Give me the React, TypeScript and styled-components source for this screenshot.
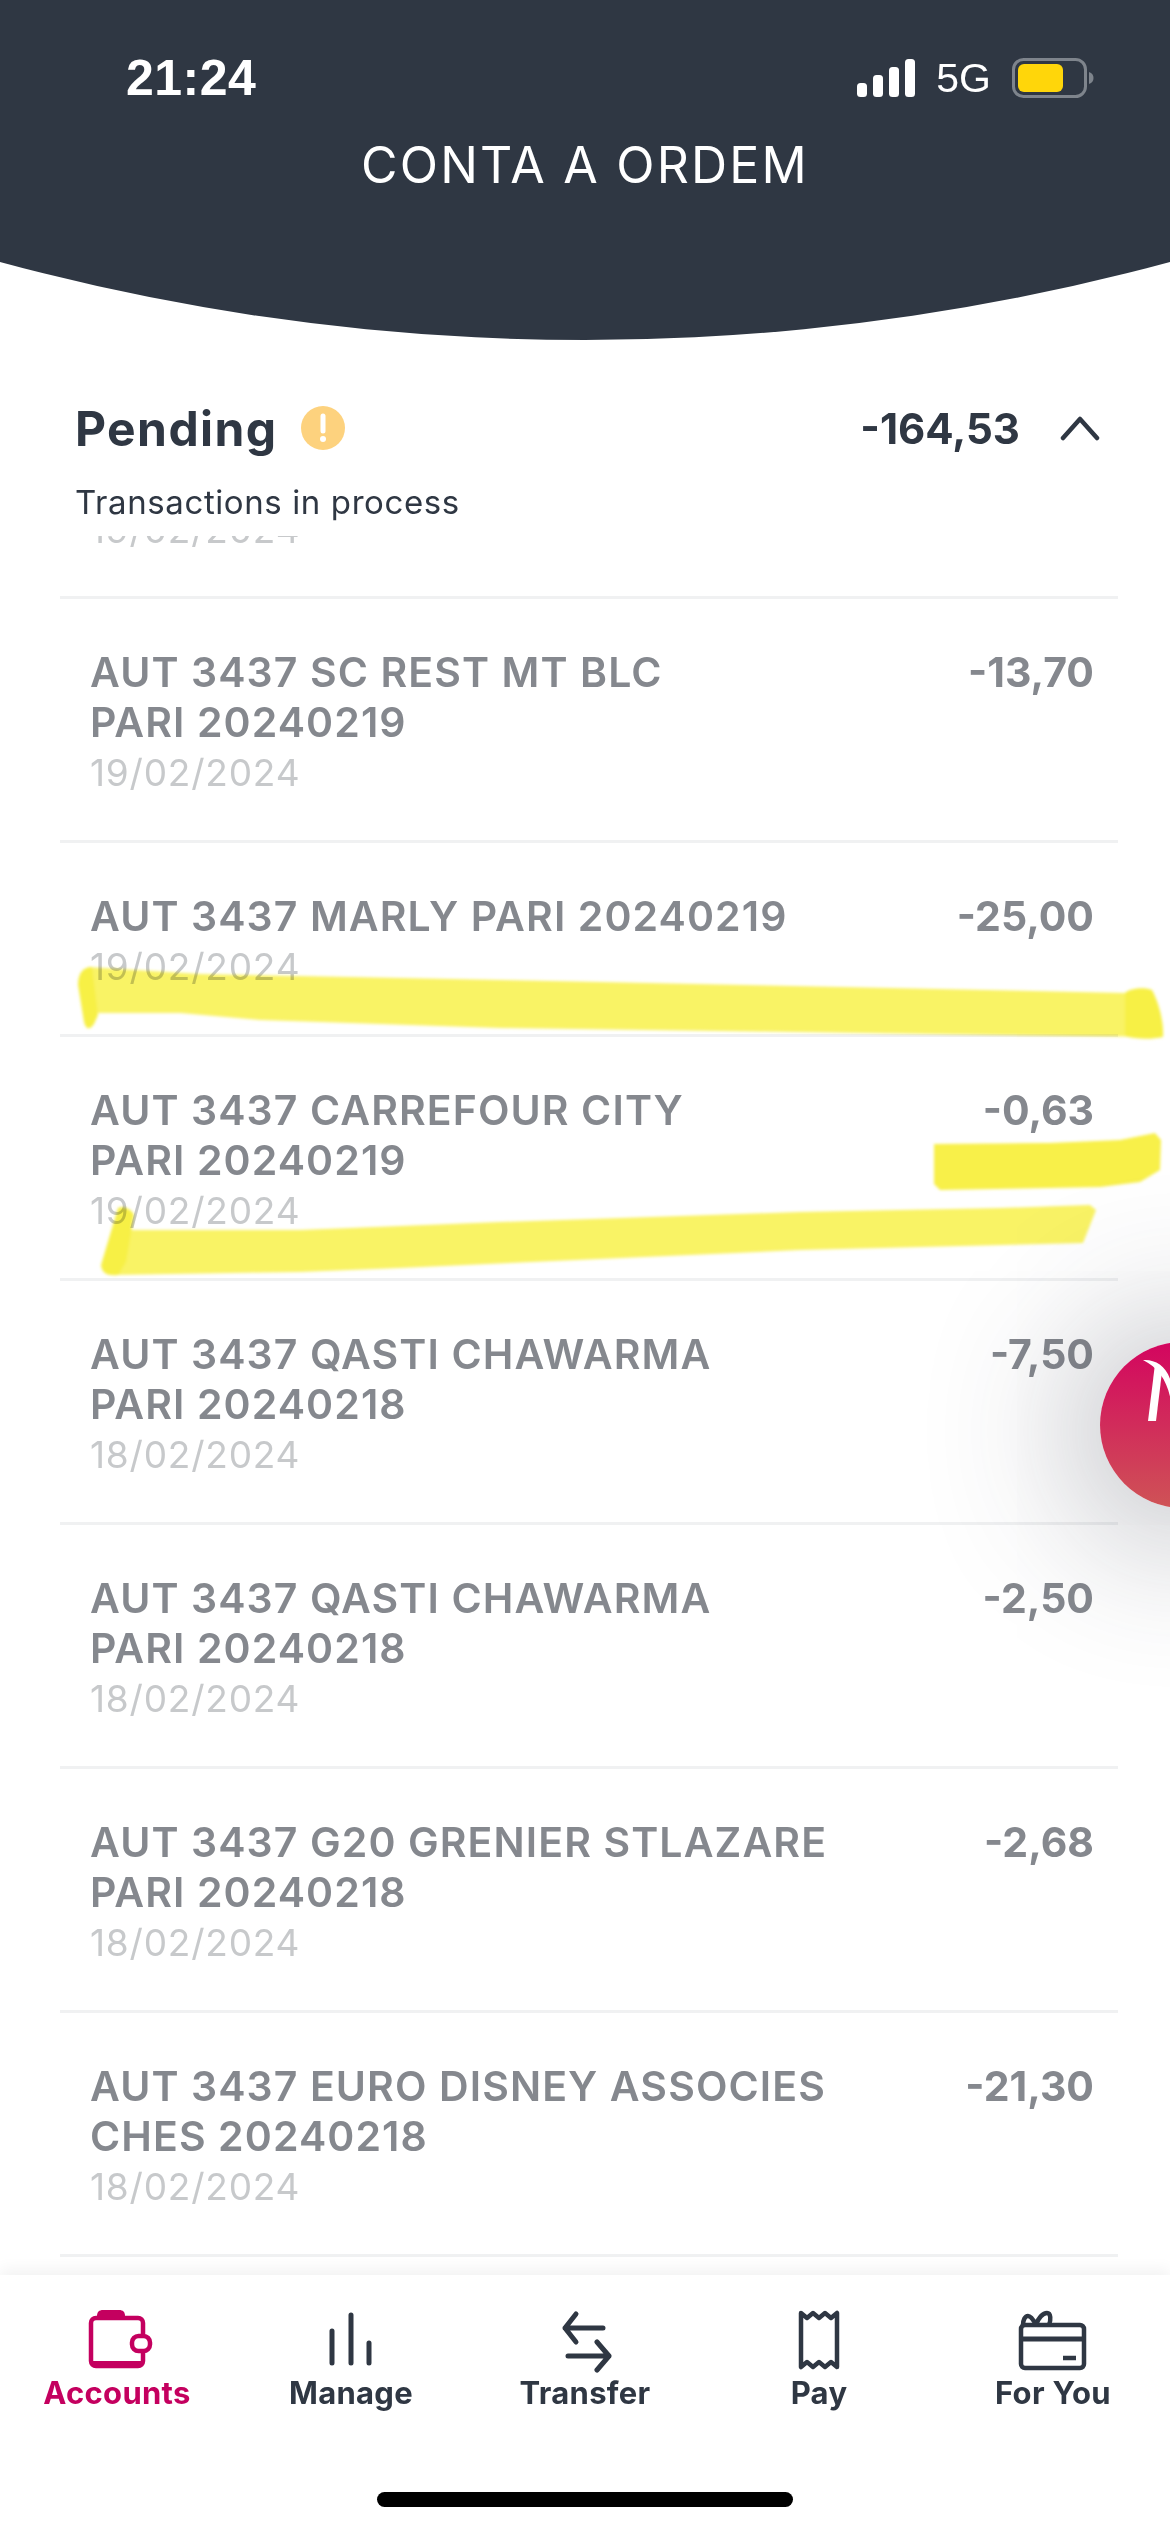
import React from "react";
import styled, { createGlobalStyle } from "styled-components";

const Global = createGlobalStyle`
  html, body { margin: 0; padding: 0; background: #fff; }
  * { box-sizing: border-box; }
`;

const FONT = `Inter, "Noto Sans", "Liberation Sans", sans-serif`;
const INK = "#2f3743";
const ACCENT = "#c4005f";

const Screen = styled.div`
  position: relative;
  width: 1170px;
  height: 2532px;
  overflow: hidden;
  display: flex;
  flex-direction: column;
  background: #fff;
  font-family: ${FONT};
`;

/* Dark header with the bowed lower edge */
const Header = styled.header`
  flex: none;
  height: 340px;
  background: ${INK};
  clip-path: circle(2233px at 585px -1893px);
  color: #fff;
  padding-top: 50px;
`;

const StatusBar = styled.div`
  display: flex;
  align-items: center;
  justify-content: space-between;
  height: 56px;
  padding: 0 76px 0 126px;
`;

const Clock = styled.span`
  font: 700 50px/56px "Liberation Sans", sans-serif;
  letter-spacing: 0.5px;
`;

const StatusIcons = styled.div`
  display: flex;
  align-items: center;
  gap: 21px;
`;

const Network = styled.span`
  font: 400 41px/56px "Liberation Sans", sans-serif;
`;

const Title = styled.h1`
  margin: 30px 0 0;
  text-align: center;
  font: 400 50px/58px ${FONT};
  letter-spacing: 2.2px;
`;

const Pending = styled.section`
  flex: none;
  height: 196px;
  padding: 60px 70px 0 75px;
`;

const PendingTop = styled.div`
  display: flex;
  align-items: center;
  height: 56px;
`;

const PendingLabel = styled.span`
  font-weight: 700;
  font-size: 48px;
  letter-spacing: 1.4px;
  color: ${INK};
`;

const PendingIcon = styled.svg`
  margin-left: 24px;
  width: 44px;
  height: 44px;
`;

const PendingTotal = styled.span`
  margin-left: auto;
  font-weight: 700;
  font-size: 42px;
  color: ${INK};
`;

const Chevron = styled.svg`
  margin-left: 40px;
  width: 40px;
  height: 26px;
`;

const PendingNote = styled.p`
  margin: 26px 0 0;
  font-weight: 400;
  font-size: 33px;
  line-height: 40px;
  letter-spacing: 0.6px;
  color: ${INK};
`;

const List = styled.div`
  flex: 1;
  min-height: 0;
  overflow: hidden;
  padding: 0 52px 0 60px;
`;

const Row = styled.div`
  display: flex;
  justify-content: space-between;
  align-items: flex-start;
  padding: 48px 24px 42px 30px;
  border-bottom: 3px solid #f0f1f2;
`;

/* The row that has scrolled most of the way under the section heading */
const ClippedRow = styled.div`
  height: 63px;
  display: flex;
  flex-direction: column;
  justify-content: flex-end;
  padding: 0 24px 41px 30px;
  border-bottom: 3px solid #f0f1f2;
  overflow: hidden;
`;

const RowText = styled.div`
  display: flex;
  flex-direction: column;
`;

const Label = styled.span`
  font-weight: 600;
  font-size: 41px;
  line-height: 50px;
  letter-spacing: 1.1px;
  color: #85888e;
  white-space: pre-line;
`;

const DateText = styled.span`
  font-weight: 400;
  font-size: 37px;
  line-height: 51px;
  letter-spacing: 0.8px;
  color: #c7c9cb;
`;

const Amount = styled.span`
  font-weight: 700;
  font-size: 41px;
  line-height: 50px;
  color: #85888e;
`;

const TabBar = styled.nav`
  position: relative;
  flex: none;
  height: 257px;
  background: #fff;
  box-shadow: 0 -6px 14px rgba(0, 0, 0, 0.05);
  padding-top: 32px;
`;

const Tabs = styled.div`
  display: grid;
  grid-template-columns: repeat(5, 1fr);
`;

const Tab = styled.div<{ $active?: boolean }>`
  display: flex;
  flex-direction: column;
  align-items: center;
  color: ${(p) => (p.$active ? ACCENT : INK)};
`;

const TabIcon = styled.svg`
  width: 80px;
  height: 66px;
`;

const TabLabel = styled.span`
  margin-top: 1px;
  font-weight: 700;
  font-size: 31px;
  line-height: 38px;
  letter-spacing: 0.3px;
`;

const HomeBar = styled.div`
  width: 416px;
  height: 15px;
  margin: 80px auto 0;
  border-radius: 8px;
  background: #000;
`;

/* Floating assistant button, partly off the right edge */
const Floating = styled.div`
  position: absolute;
  left: 1100px;
  top: 1342px;
  width: 166px;
  height: 166px;
  border-radius: 50%;
  background: linear-gradient(180deg, #d3055f 0%, #cf5356 100%);
  box-shadow: 0 6px 150px 30px rgba(45, 50, 65, 0.3);
`;

const FloatingMark = styled.svg`
  position: absolute;
  left: 0;
  top: 0;
  width: 166px;
  height: 166px;
`;

/* Marker strokes laid over the list */
const Marker = styled.svg`
  position: absolute;
  left: 0;
  top: 0;
  width: 1170px;
  height: 2532px;
  mix-blend-mode: multiply;
  pointer-events: none;
`;

const rows = [
  { label: "AUT 3437 SC REST MT BLC\nPARI 20240219", date: "19/02/2024", amount: "-13,70" },
  { label: "AUT 3437 MARLY PARI 20240219", date: "19/02/2024", amount: "-25,00" },
  { label: "AUT 3437 CARREFOUR CITY\nPARI 20240219", date: "19/02/2024", amount: "-0,63" },
  { label: "AUT 3437 QASTI CHAWARMA\nPARI 20240218", date: "18/02/2024", amount: "-7,50" },
  { label: "AUT 3437 QASTI CHAWARMA\nPARI 20240218", date: "18/02/2024", amount: "-2,50" },
  { label: "AUT 3437 G20 GRENIER STLAZARE\nPARI 20240218", date: "18/02/2024", amount: "-2,68" },
  { label: "AUT 3437 EURO DISNEY ASSOCIES\nCHES 20240218", date: "18/02/2024", amount: "-21,30" },
];

const Signal = () => (
  <svg width="58" height="38" viewBox="0 0 58 38" fill="#fff">
    <rect x="0" y="24" width="10" height="14" rx="3.5" />
    <rect x="16" y="16" width="10" height="22" rx="3.5" />
    <rect x="32" y="8" width="10" height="30" rx="3.5" />
    <rect x="48" y="0" width="10" height="38" rx="3.5" />
  </svg>
);

const Battery = () => (
  <svg width="82" height="40" viewBox="0 0 82 40">
    <rect x="1.5" y="1.5" width="72" height="37" rx="10" fill="none" stroke="#7e848c" strokeWidth="3" />
    <rect x="6" y="6" width="45" height="28" rx="6" fill="#ffd60a" />
    <path d="M77 14c3 1 4.5 3.2 4.5 6s-1.500 5-4.500 6z" fill="#7e848c" />
  </svg>
);

const WalletIcon = () => (
  <TabIcon viewBox="0 0 80 66" fill="none" stroke="currentColor" strokeWidth="4.5">
    <path d="M20 9c0-4 2-6 6-6h16c4 0 6 2 6 6z" fill="currentColor" stroke="none" />
    <rect x="14" y="11" width="52" height="48" rx="5" />
    <path d="M14 54h52v2c0 2-1 3-3 3H17c-2 0-3-1-3-3z" fill="currentColor" stroke="none" />
    <rect x="55" y="29" width="18" height="15" rx="6.5" fill="#fff" />
  </TabIcon>
);

const BarsIcon = () => (
  <TabIcon viewBox="0 0 80 66" fill="none" stroke="currentColor" strokeWidth="5" strokeLinecap="round">
    <path d="M21 24v32M40 8v48M58 36v20" />
  </TabIcon>
);

const TransferIcon = () => (
  <TabIcon viewBox="0 0 80 66" fill="none" stroke="currentColor" strokeWidth="5" strokeLinecap="round" strokeLinejoin="round">
    <path d="M58 21H20M31 7 20 21l11 14" />
    <path d="M23 49h41M52 35l12 14-12 14" />
  </TabIcon>
);

const ReceiptIcon = () => (
  <TabIcon viewBox="0 0 80 66" fill="none" stroke="currentColor" strokeWidth="4.5" strokeLinejoin="round">
    <path d="M22 6l6 5 6-5 6 5 6-5 6 5 6-5v54l-6-5-6 5-6-5-6 5-6-5-6 5z" />
  </TabIcon>
);

const GiftCardIcon = () => (
  <TabIcon viewBox="0 0 80 66" fill="none" stroke="currentColor" strokeWidth="4.500" strokeLinejoin="round">
    <rect x="8" y="18" width="63" height="43" rx="4" />
    <path d="M8 32h63" strokeWidth="5" />
    <path d="M50 51h13" />
    <path d="M10 18c0-5 2-9 5-9s6 5 8 9M23 18c2-7 7-12 11-12s4 7 2 12" />
  </TabIcon>
);

export default function App() {
  return (
    <Screen>
      <Global />
      <Header>
        <StatusBar>
          <Clock>21:24</Clock>
          <StatusIcons>
            <Signal />
            <Network>5G</Network>
            <Battery />
          </StatusIcons>
        </StatusBar>
        <Title>CONTA A ORDEM</Title>
      </Header>

      <Pending>
        <PendingTop>
          <PendingLabel>Pending</PendingLabel>
          <PendingIcon viewBox="0 0 44 44">
            <circle cx="22" cy="22" r="22" fill="#fdd27e" />
            <path d="M22 10v15" stroke="#fff" strokeWidth="5" strokeLinecap="round" />
            <circle cx="22" cy="33" r="3" fill="#fff" />
          </PendingIcon>
          <PendingTotal>-164,53</PendingTotal>
          <Chevron viewBox="0 0 40 26" fill="none" stroke={INK} strokeWidth="4.500" strokeLinecap="round" strokeLinejoin="round">
            <path d="M3 23 20 4l17 19" />
          </Chevron>
        </PendingTop>
        <PendingNote>Transactions in process</PendingNote>
      </Pending>

      <List>
        <ClippedRow>
          <DateText>19/02/2024</DateText>
        </ClippedRow>
        {rows.map((r, i) => (
          <Row key={i}>
            <RowText>
              <Label>{r.label}</Label>
              <DateText>{r.date}</DateText>
            </RowText>
            <Amount>{r.amount}</Amount>
          </Row>
        ))}
      </List>

      <TabBar>
        <Tabs>
          <Tab $active>
            <WalletIcon />
            <TabLabel>Accounts</TabLabel>
          </Tab>
          <Tab>
            <BarsIcon />
            <TabLabel>Manage</TabLabel>
          </Tab>
          <Tab>
            <TransferIcon />
            <TabLabel>Transfer</TabLabel>
          </Tab>
          <Tab>
            <ReceiptIcon />
            <TabLabel>Pay</TabLabel>
          </Tab>
          <Tab>
            <GiftCardIcon />
            <TabLabel>For You</TabLabel>
          </Tab>
        </Tabs>
        <HomeBar />
      </TabBar>

      <Floating>
        <FloatingMark viewBox="0 0 166 166">
          <path d="M43 18c12-1 24 6 28 22v20c-3-20-12-34-28-42z" fill="#fff" />
          <path d="M55 22c3 2 5 5 7 8l-6 49h-8z" fill="#fff" />
        </FloatingMark>
      </Floating>

      <Marker viewBox="0 0 1170 2532">
        <defs>
          <filter id="soft" x="-5%" y="-30%" width="110%" height="160%">
            <feGaussianBlur stdDeviation="1.500" />
          </filter>
        </defs>
        <g filter="url(#soft)" fill="#f9f365">
          <path d="M88 967 200 974 600 982 1125 993 1163 1037 1000 1035 500 1028 260 1020 180 1013 97 1013Z" />
          <path d="M78 985C78 972 84 967 92 967L98 1015 94 1024C90 1030 86 1030 84 1022Z" fill="#f7f044" />
          <path d="M1125 993C1130 988 1145 987 1152 990 1160 1005 1164 1025 1163 1037 1150 1040 1135 1039 1125 1036Z" fill="#f7f044" />
          <path d="M934 1144 1050 1143 1120 1140 1140 1136 1155 1133 1161 1140 1160 1170 1140 1182 1100 1187 940 1190 934 1184Z" fill="#f8f04a" />
          <path d="M125 1230 300 1230 500 1222 800 1212 1000 1208 1090 1205 1096 1210 1083 1243 800 1250 400 1268 300 1272 112 1275Z" />
          <path d="M118 1208C124 1205 132 1210 134 1215L126 1262 118 1275C108 1276 102 1274 101 1265Z" fill="#f7f044" />
        </g>
      </Marker>
    </Screen>
  );
}
